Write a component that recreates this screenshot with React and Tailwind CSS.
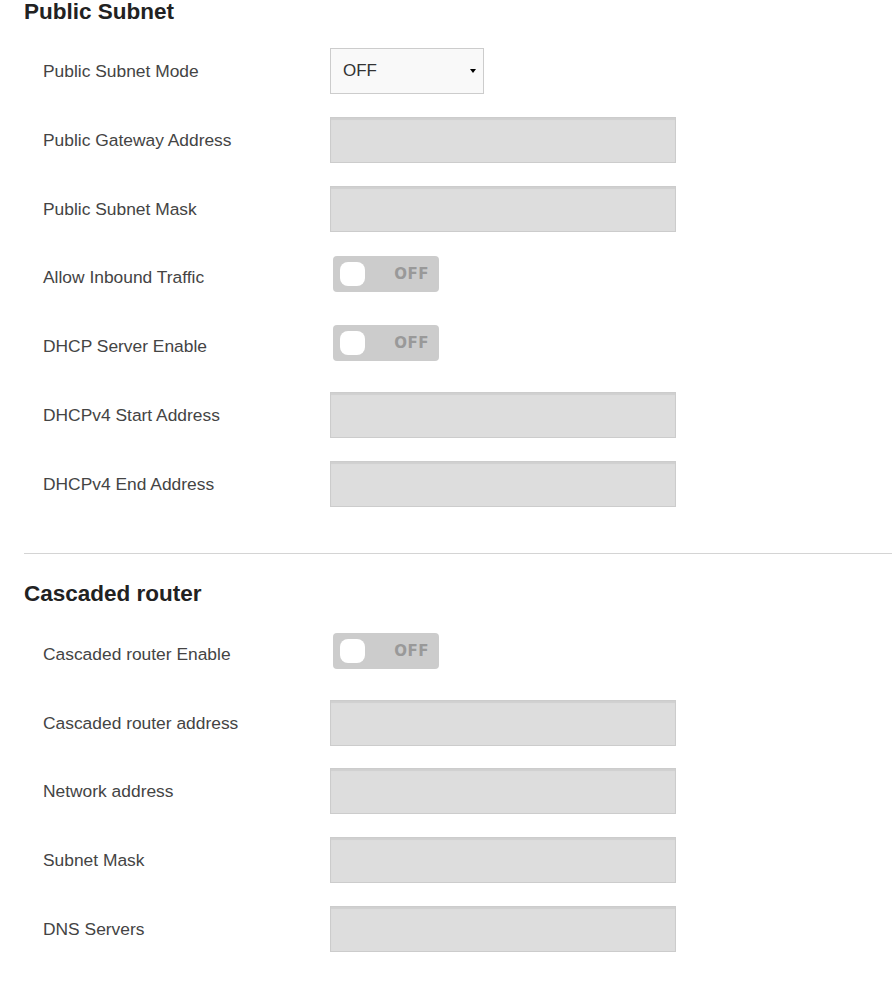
import React from 'react';

const publicRows = [
  { label: 'Public Subnet Mode', type: 'select' },
  { label: 'Public Gateway Address', type: 'input' },
  { label: 'Public Subnet Mask', type: 'input' },
  { label: 'Allow Inbound Traffic', type: 'toggle' },
  { label: 'DHCP Server Enable', type: 'toggle' },
  { label: 'DHCPv4 Start Address', type: 'input' },
  { label: 'DHCPv4 End Address', type: 'input' },
];

const cascadedRows = [
  { label: 'Cascaded router Enable', type: 'toggle' },
  { label: 'Cascaded router address', type: 'input' },
  { label: 'Network address', type: 'input' },
  { label: 'Subnet Mask', type: 'input' },
  { label: 'DNS Servers', type: 'input' },
];

const Toggle = () => (
  <div className="self-start mt-[2px] ml-[3px] w-[106px] h-[36px] rounded-[4px] bg-[#cccccc] flex items-center pl-[7px] pr-[10px]">
    <div className="w-[25px] h-[24px] rounded-[8px] bg-white" />
    <span className="ml-auto text-[15px] font-bold tracking-[0.5px] text-[#999999] font-['DejaVu_Sans',sans-serif]">
      OFF
    </span>
  </div>
);

const Select = () => (
  <div className="w-[154px] h-[46px] border border-[#cccccc] bg-[#f9f9f9] flex items-center pl-[12px] pr-[7px] text-[17px] text-[#333333]">
    <span>OFF</span>
    <svg className="ml-auto" width="6" height="4" viewBox="0 0 6 4">
      <path d="M0 0 L6 0 L3 4 Z" fill="#000" />
    </svg>
  </div>
);

const Field = () => (
  <div className="w-[346px] h-[46px] border border-[#cccccc] bg-[#dddddd] shadow-[inset_0_2px_1px_rgba(0,0,0,0.06)]" />
);

const Row = ({ label, type }) => (
  <div className="flex items-center h-[46px]">
    <label className="w-[306px] shrink-0 pl-[19px] text-[17.4px] text-[#444444]">{label}</label>
    {type === 'select' && <Select />}
    {type === 'input' && <Field />}
    {type === 'toggle' && <Toggle />}
  </div>
);

const App = () => {
  return (
    <div className="w-[892px] h-[992px] bg-white pl-[24px] font-['Liberation_Sans',Arial,sans-serif]">
      {/* Public Subnet */}
      <h2 className="h-[24px] leading-[24px] text-[22.5px] font-bold text-[#222222]">Public Subnet</h2>
      <div className="mt-[24px] flex flex-col gap-[22.8px]">
        {publicRows.map((r) => (
          <Row key={r.label} {...r} />
        ))}
      </div>

      <div className="mt-[46px] h-px bg-[#d4d4d4]" />

      {/* Cascaded router */}
      <h2 className="mt-[28px] h-[24px] leading-[24px] text-[22.5px] font-bold text-[#222222]">Cascaded router</h2>
      <div className="mt-[25px] flex flex-col gap-[22.8px]">
        {cascadedRows.map((r) => (
          <Row key={r.label} {...r} />
        ))}
      </div>
    </div>
  );
};

export default App;
